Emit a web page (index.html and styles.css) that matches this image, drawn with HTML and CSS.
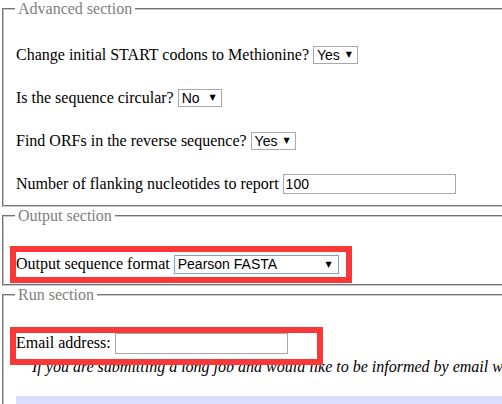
FILE: index.html
```html
<!DOCTYPE html>
<html>
<head>
<meta charset="utf-8">
<link rel="stylesheet" href="styles.css">
</head>
<body>
<div class="page">
  <fieldset class="section adv">
    <legend>Advanced section</legend>
    <div class="row first">Change initial START codons to Methionine?&nbsp;<span class="sel w45"><select><option>Yes</option></select></span></div>
    <div class="row">Is the sequence circular?&nbsp;<span class="sel w44"><select><option>No</option></select></span></div>
    <div class="row">Find ORFs in the reverse sequence?&nbsp;<span class="sel w45"><select><option>Yes</option></select></span></div>
    <div class="row">Number of flanking nucleotides to report&nbsp;<input class="txt" type="text" value="100"></div>
  </fieldset>
  <fieldset class="section out">
    <legend>Output section</legend>
    <div class="row first">Output sequence format&nbsp;<span class="sel w165 focus"><select><option>Pearson FASTA</option></select></span></div>
  </fieldset>
  <fieldset class="section run">
    <legend>Run section</legend>
    <div class="row first">Email address:&nbsp;<input class="txt email" type="text"></div>
    <div class="note">If you are submitting a long job and would like to be informed by email when the job is complete, enter your email address here.</div>
    <div class="lav"></div>
  </fieldset>
  <div class="mark mark-out"></div>
  <div class="mark mark-email"></div>
</div>
</body>
</html>
```
FILE: styles.css
```css
html, body {
  margin: 0;
  padding: 0;
  background: #fff;
  overflow: hidden;
}
body {
  width: 502px;
  height: 404px;
  font-family: "Liberation Serif", "Times New Roman", serif;
  font-size: 16px;
  color: #000;
}
.page {
  position: relative;
  width: 760px;
}
.section {
  margin: 0 0 0 2px;
  padding: 0 12px 8px 12px;
  border: 2px groove #c8c8c8;
  min-width: 0;
  font-family: "Liberation Serif", "Times New Roman", serif;
}
.section legend {
  padding: 0 3px;
  margin-left: -1px;
  color: #808080;
  font-family: "Liberation Serif", "Times New Roman", serif;
  font-size: 16px;
  line-height: 18px;
  height: 18px;
}
.row {
  display: flex;
  align-items: center;
  height: 22px;
  white-space: nowrap;
  margin-top: 21px;
}
.adv .row.first { margin-top: 26px; }
.adv { padding-bottom: 10px; }
.out { margin-top: 0; padding-bottom: 9px; }
.out .row.first { margin-top: 28px; }
.run .row.first { margin-top: 28px; }
.sel {
  position: relative;
  display: inline-block;
  height: 18px;
}
.sel select {
  appearance: none;
  -webkit-appearance: none;
  width: 100%;
  height: 100%;
  box-sizing: border-box;
  border: 1px solid #a9a9a9;
  background: #fff;
  font-family: "Liberation Sans", Arial, sans-serif;
  font-size: 14px;
  color: #000;
  padding: 0 0 0 3px;
  margin: 0;
  border-radius: 0;
  outline: none;
}
.sel::after {
  content: "▼";
  position: absolute;
  right: 6px;
  top: 4px;
  font-family: "DejaVu Sans", sans-serif;
  font-size: 8px;
  line-height: 10px;
  color: #000;
  pointer-events: none;
}
.w45 { width: 45px; }
.w44 { width: 44px; }
.w165 { width: 165px; height: 19px; }
.sel.focus select { border-color: #7fa2db; }
.sel.focus::after { right: 7px; top: 5px; }
.txt {
  box-sizing: border-box;
  width: 173px;
  height: 20px;
  border: 1px solid #a9a9a9;
  padding: 0 2px;
  margin: 0;
  font-family: "Liberation Sans", Arial, sans-serif;
  font-size: 14px;
  color: #000;
  border-radius: 0;
  outline: none;
}
.email { height: 21px; }
.note {
  font-style: italic;
  white-space: nowrap;
  padding-left: 16px;
  line-height: 18px;
  margin-top: 4px;
}
.lav {
  background: #ddddff;
  height: 40px;
  margin-top: 20px;
}
.mark {
  position: absolute;
  border: 6px solid #fb3838;
  box-sizing: border-box;
}
.mark-out {
  left: 10px;
  top: 246px;
  width: 342px;
  height: 37px;
}
.mark-email {
  left: 10px;
  top: 327px;
  width: 313px;
  height: 38px;
}
```
